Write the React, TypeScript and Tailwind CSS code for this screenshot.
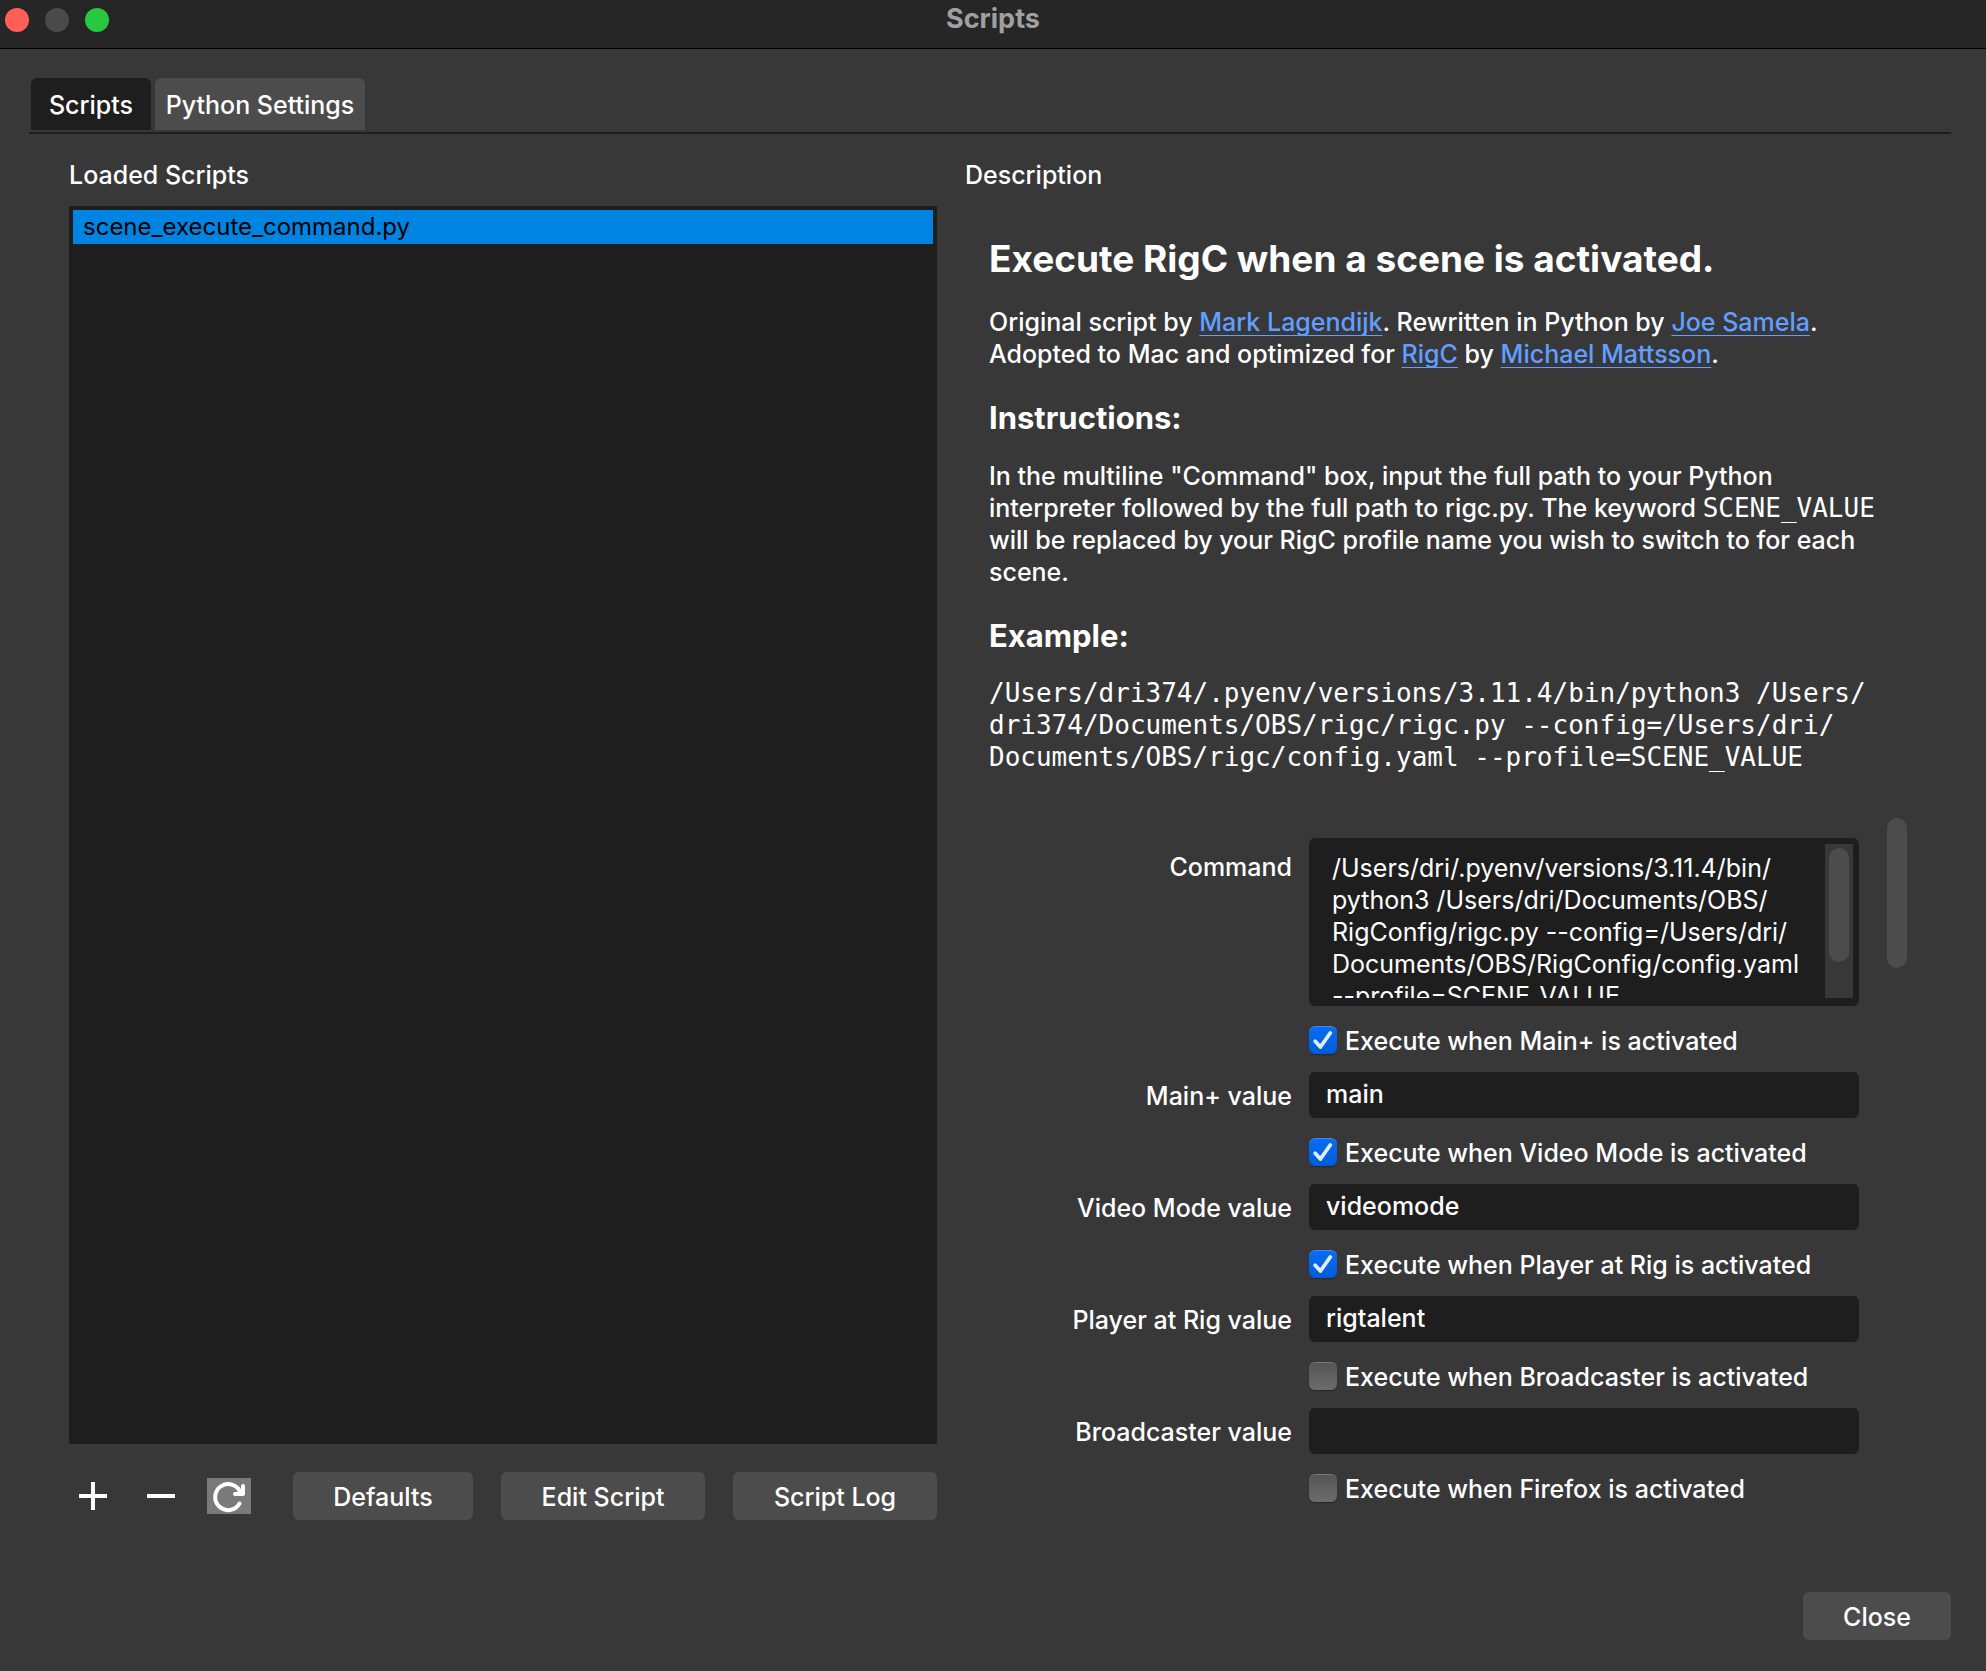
import { useState, type ReactNode } from "react";

type Scene = { name: string; value: string; enabled: boolean };

const scenes: Scene[] = [
  { name: "Main+", value: "main", enabled: true },
  { name: "Video Mode", value: "videomode", enabled: true },
  { name: "Player at Rig", value: "rigtalent", enabled: true },
  { name: "Broadcaster", value: "", enabled: false },
];

const command = [
  "/Users/dri/.pyenv/versions/3.11.4/bin/",
  "python3 /Users/dri/Documents/OBS/",
  "RigConfig/rigc.py --config=/Users/dri/",
  "Documents/OBS/RigConfig/config.yaml",
  "--profile=SCENE_VALUE",
].join("\n");

function PushButton({ children, wide }: { children: ReactNode; wide?: boolean }) {
  return (
    <button
      type="button"
      className={
        wide
          ? "h-12 flex-[204] rounded-md bg-[#4c4c4c] pt-0.5"
          : "h-12 flex-[180] rounded-md bg-[#4c4c4c] pt-0.5"
      }
    >
      {children}
    </button>
  );
}

function Link({ children }: { children: ReactNode }) {
  return (
    <a href="#" className="text-[#619eff] underline decoration-1 underline-offset-4 [text-decoration-skip-ink:none]">
      {children}
    </a>
  );
}

function Check({ name, initial }: { name: string; initial: boolean }) {
  const [on, setOn] = useState(initial);
  return (
    <label className="col-start-2 flex h-7 items-center gap-2">
      <span className="relative size-7 shrink-0">
        <input
          type="checkbox"
          checked={on}
          onChange={(e) => setOn(e.target.checked)}
          className="block size-7 appearance-none rounded-md border-t border-[#767676] bg-linear-to-b from-[#555555] to-[#6c6c6c] shadow-[0_1px_1px_rgba(0,0,0,0.3)] checked:border-[#3b8cf2] checked:from-[#0a6cf0] checked:to-[#005cd8]"
        />
        {on && (
          <svg viewBox="0 0 28 28" className="pointer-events-none absolute inset-0 size-7" fill="none" aria-hidden="true">
            <path d="M6.2 15.2 11.4 21 21.3 7" stroke="#dfeafc" strokeWidth="3.8" strokeLinecap="round" strokeLinejoin="round" />
          </svg>
        )}
      </span>
      <span className="pt-0.5">Execute when {name} is activated</span>
    </label>
  );
}

export default function App() {
  return (
    <div className="flex min-h-screen flex-col bg-[#383838] font-['Inter',sans-serif] text-[25px] leading-8 font-[450] text-white">
      <header className="grid h-[49px] grid-cols-[1fr_auto_1fr] border-b border-black bg-[#262626]">
        <div className="flex gap-4 pt-2 pl-[5px]">
          <button type="button" aria-label="Close window" className="size-6 rounded-full bg-[#ff5f57]" />
          <button type="button" aria-label="Minimize window" className="size-6 rounded-full bg-[#4a4a4a]" />
          <button type="button" aria-label="Zoom window" className="size-6 rounded-full bg-[#28c840]" />
        </div>
        <h1 className="pt-[3px] text-[27px] font-bold text-[#a0a0a0]">Scripts</h1>
      </header>

      <main className="flex flex-1 flex-col pt-[29px] pr-[35px] pb-[31px] pl-[29px]">
        <div role="tablist" className="flex gap-1 border-b-2 border-[#1e1e1e] pb-0.5 pl-0.5">
          <button type="button" role="tab" aria-selected="true" className="h-[52px] w-[120px] rounded-t-md bg-[#1e1e1e] pt-0.5">
            Scripts
          </button>
          <button type="button" role="tab" aria-selected="false" className="h-[52px] w-[210px] rounded-t-md bg-[#4c4c4c] pt-0.5">
            Python Settings
          </button>
        </div>

        <div className="grid flex-1 grid-cols-[868fr_952fr] gap-7 pt-[25px] pr-[34px] pl-10">
          <section className="flex flex-col">
            <h2>Loaded Scripts</h2>
            <ul className="mt-[15px] flex-1 bg-[#1e1e1e] p-1">
              <li className="h-[34px] bg-[#0084e2] px-2.5 text-[24px] leading-[34px] font-normal text-black">scene_execute_command.py</li>
            </ul>
            <div className="mt-7 flex items-center">
              <div className="mr-[42px] flex items-center pl-2.5">
                <button type="button" aria-label="Add script" className="mr-10">
                  <svg viewBox="0 0 28 28" className="size-7" fill="none" stroke="white" strokeWidth="4">
                    <path d="M14 0V28M0 14H28" />
                  </svg>
                </button>
                <button type="button" aria-label="Remove script" className="mr-8">
                  <svg viewBox="0 0 28 28" className="size-7" fill="none" stroke="white" strokeWidth="4">
                    <path d="M0 14H28" />
                  </svg>
                </button>
                <button type="button" aria-label="Reload scripts" className="bg-[#7a7a7a]">
                  <svg viewBox="0 0 44 36" className="h-9 w-11" fill="none" stroke="white" strokeWidth="4" strokeLinecap="round" strokeLinejoin="round">
                    <path d="M32.5 25.5A13 13 0 1 1 33.5 15" />
                    <path d="M36 8V16H28" />
                  </svg>
                </button>
              </div>
              <div className="flex flex-1 gap-7">
                <PushButton>Defaults</PushButton>
                <PushButton wide>Edit Script</PushButton>
                <PushButton wide>Script Log</PushButton>
              </div>
            </div>
          </section>

          <section className="flex flex-col">
            <h2>Description</h2>
            <div className="mt-[45px] pl-6">
              <h3 className="text-[37px] leading-[46px] font-bold">Execute RigC when a scene is activated.</h3>
              <p className="mt-6">
                Original script by <Link>Mark Lagendijk</Link>. Rewritten in Python by <Link>Joe Samela</Link>.
                <br />
                Adopted to Mac and optimized for <Link>RigC</Link> by <Link>Michael Mattsson</Link>.
              </p>
              <h4 className="mt-7 text-[31px] leading-10 font-bold">Instructions:</h4>
              <p className="mt-[22px]">
                In the multiline "Command" box, input the full path to your Python
                <br />
                interpreter followed by the full path to rigc.py. The keyword{" "}
                <code className="font-['DejaVu_Sans_Mono',monospace] text-[26px]">SCENE_VALUE</code>
                <br />
                will be replaced by your RigC profile name you wish to switch to for each
                <br />
                scene.
              </p>
              <h4 className="mt-7 text-[31px] leading-10 font-bold">Example:</h4>
              <p className="mt-[21px] font-['DejaVu_Sans_Mono',monospace] text-[26px]">
                /Users/dri374/.pyenv/versions/3.11.4/bin/python3 /Users/
                <br />
                dri374/Documents/OBS/rigc/rigc.py --config=/Users/dri/
                <br />
                Documents/OBS/rigc/config.yaml --profile=SCENE_VALUE
              </p>
            </div>

            <div className="mt-[45px] flex items-start gap-7">
              <form className="grid flex-1 grid-cols-[327px_1fr] gap-x-[17px]">
                <label htmlFor="command" className="pt-[33px] text-right">
                  Command
                </label>
                <div className="mt-5 flex h-[168px] rounded-md bg-[#1e1e1e] px-1.5 pt-1.5 pb-2">
                  <textarea
                    id="command"
                    defaultValue={command}
                    wrap="off"
                    className="block min-w-0 flex-1 resize-none overflow-hidden bg-transparent pt-2 pl-[17px] font-normal outline-none"
                  />
                  <div className="w-7 bg-[#383838] p-1">
                    <div className="h-[114px] rounded-full bg-[#4c4c4c]" />
                  </div>
                </div>
                {scenes.map((s) => (
                  <div key={s.name} className="col-span-2 grid grid-cols-subgrid gap-y-[18px] pt-5">
                    <Check name={s.name} initial={s.enabled} />
                    <label htmlFor={s.name} className="pt-2 text-right">
                      {s.name} value
                    </label>
                    <input
                      id={s.name}
                      type="text"
                      defaultValue={s.value}
                      className="h-[46px] w-full min-w-0 rounded-md bg-[#1e1e1e] px-[17px] pb-0.5 outline-none"
                    />
                  </div>
                ))}
                <div className="col-span-2 grid grid-cols-subgrid pt-5">
                  <Check name="Firefox" initial={false} />
                </div>
              </form>
              <div className="mr-2.5 h-[150px] w-5 rounded-full bg-[#4c4c4c]" />
            </div>
          </section>
        </div>

        <footer className="mt-[72px] flex justify-end">
          <button type="button" className="h-12 w-[148px] rounded-md bg-[#4c4c4c] pt-0.5">
            Close
          </button>
        </footer>
      </main>
    </div>
  );
}
